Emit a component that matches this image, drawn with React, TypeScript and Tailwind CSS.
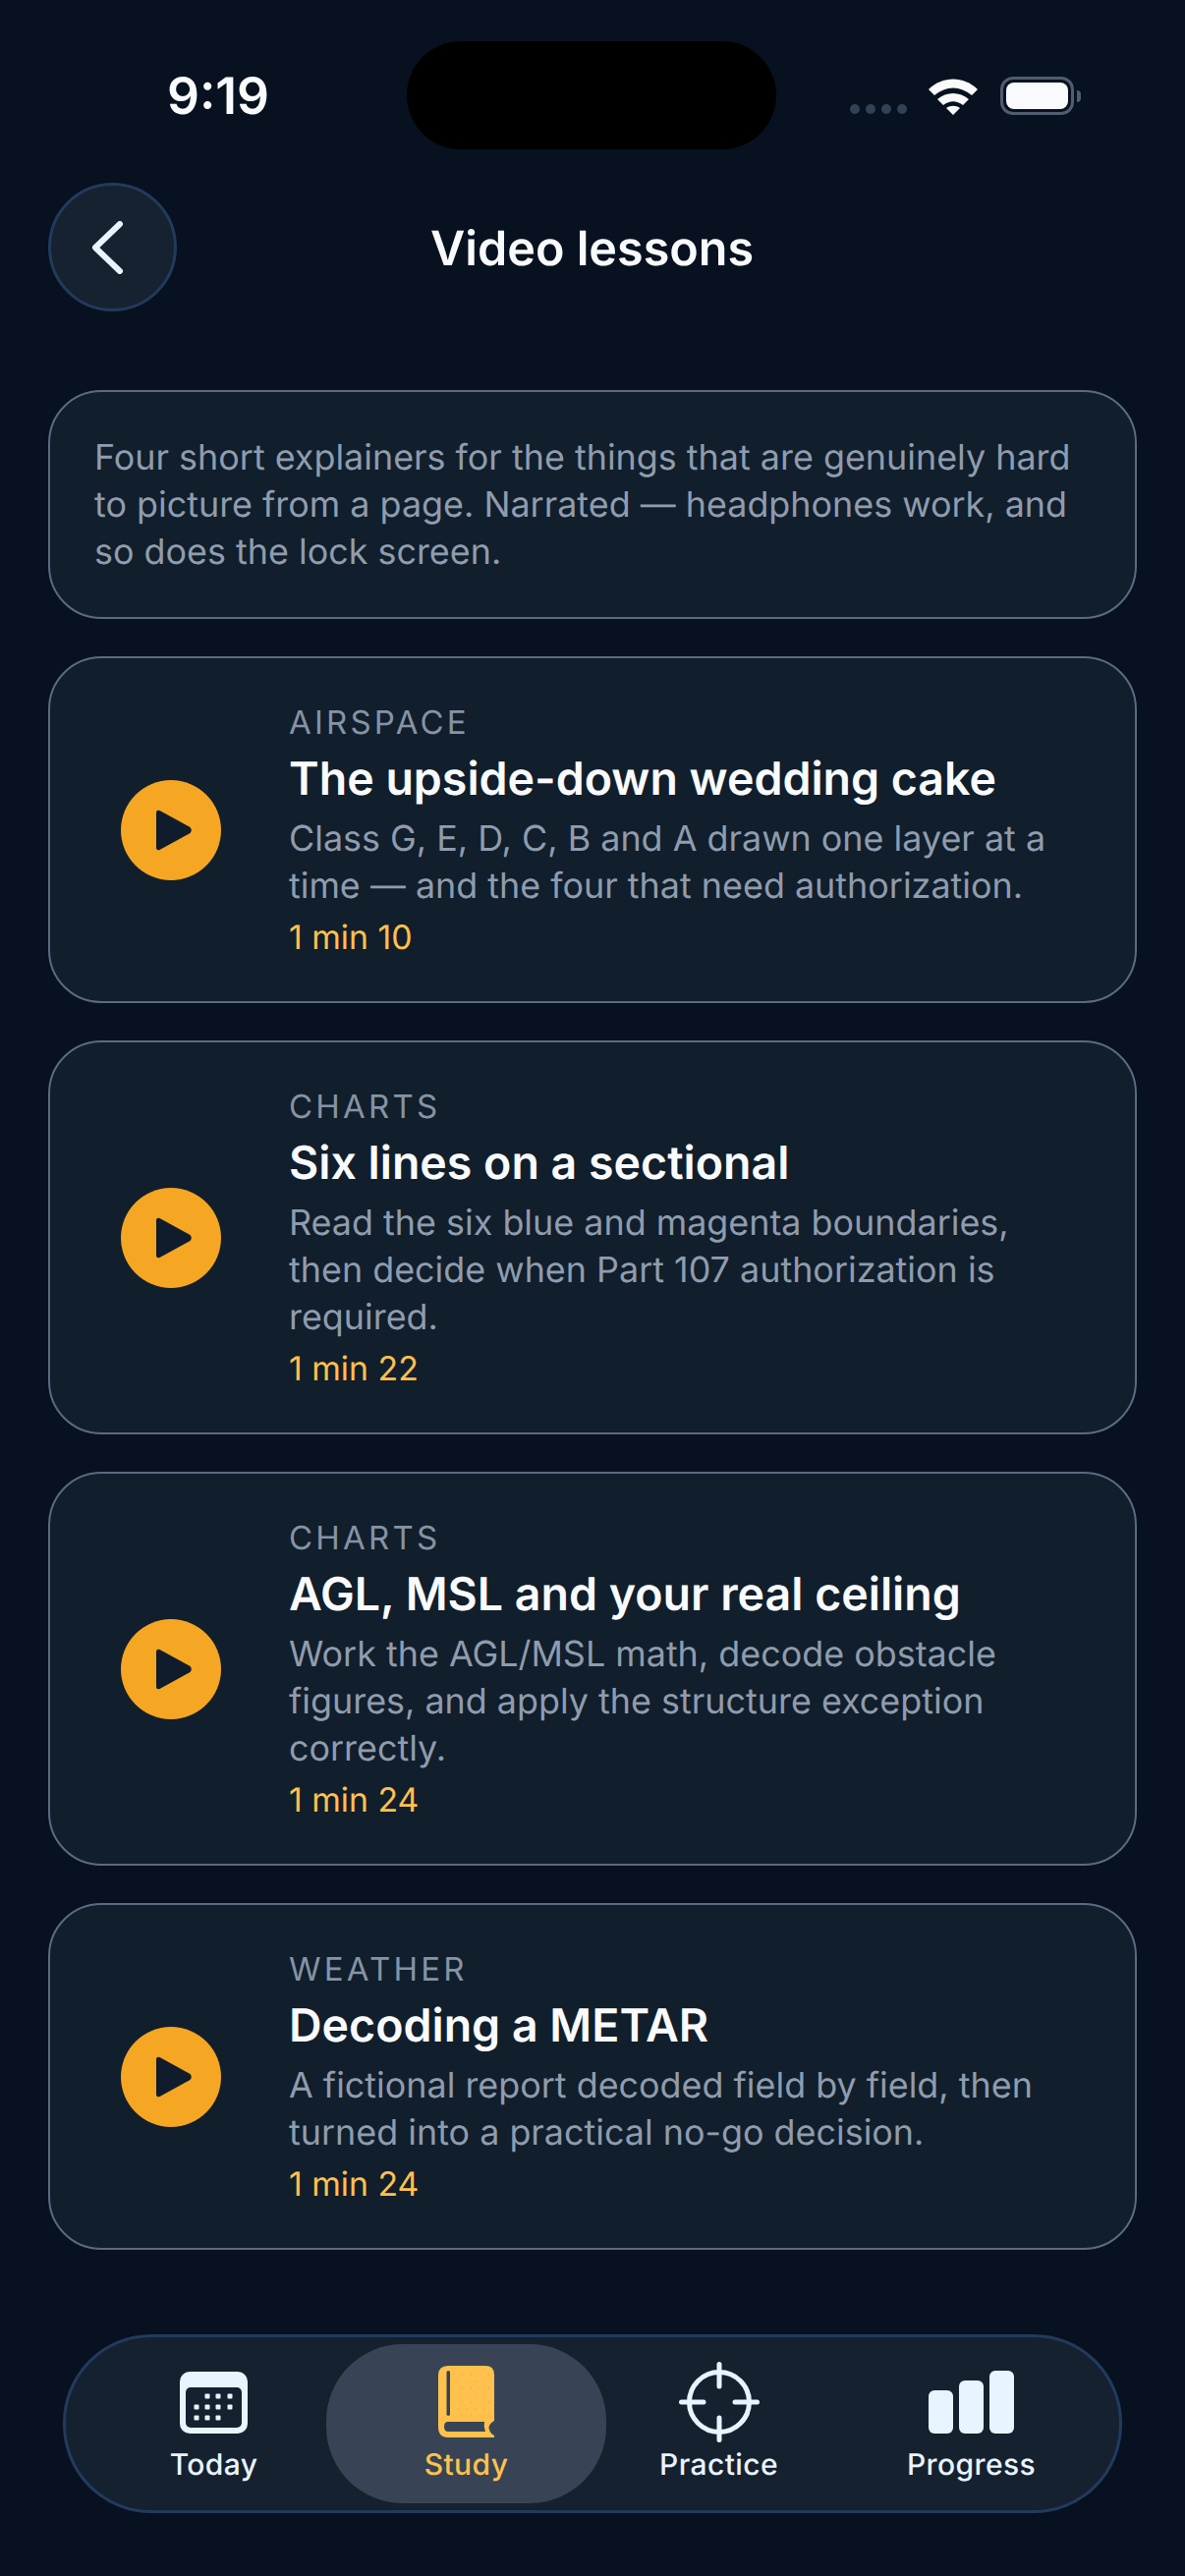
const lessons = [
  {
    tag: "AIRSPACE",
    title: "The upside-down wedding cake",
    body: ["Class G, E, D, C, B and A drawn one layer at a", "time — and the four that need authorization."],
    time: "1 min 10",
  },
  {
    tag: "CHARTS",
    title: "Six lines on a sectional",
    body: ["Read the six blue and magenta boundaries,", "then decide when Part 107 authorization is", "required."],
    time: "1 min 22",
  },
  {
    tag: "CHARTS",
    title: "AGL, MSL and your real ceiling",
    body: ["Work the AGL/MSL math, decode obstacle", "figures, and apply the structure exception", "correctly."],
    time: "1 min 24",
  },
  {
    tag: "WEATHER",
    title: "Decoding a METAR",
    body: ["A fictional report decoded field by field, then", "turned into a practical no-go decision."],
    time: "1 min 24",
  },
];

const StatusBar = () => (
  <div className="flex h-[186px] items-start">
    <div className="mt-[44px] flex h-[110px] w-[414px] items-center justify-center pl-[30px]">
      <span className="text-[51.5px] font-semibold text-[#f8fafc]">9:19</span>
    </div>
    <div className="mt-[42px] h-[110px] w-[376px] rounded-full bg-black" />
    <div className="mt-[78px] ml-[75px] flex items-end">
      <div className="mb-[1px] flex gap-[6px]">
        {[0, 1, 2, 3].map((i) => (
          <span key={i} className="h-[10px] w-[10px] rounded-full bg-[#334155]" />
        ))}
      </div>
      <svg className="ml-[22px]" width="50" height="38" viewBox="0 0 50 38">
        <path d="M0 12 C14 -2 36 -2 50 12 L44 18 C32 8 18 8 6 18 Z" fill="#f8fafc" />
        <path d="M9 22 C18 14 32 14 41 22 L35 28 C28 23 22 23 15 28 Z" fill="#f8fafc" />
        <path d="M18 31 C22 28 28 28 32 31 L25 38 Z" fill="#f8fafc" />
      </svg>
      <div className="ml-[23px] flex h-[39px] w-[75px] items-center justify-center rounded-[13px] border-[3px] border-[#4f5d6e]">
        <div className="h-[27px] w-[63px] rounded-[8px] bg-[#f8fafc]" />
      </div>
      <div className="mb-[13px] ml-[3px] h-[12px] w-[4px] rounded-r-full bg-[#4f5d6e]" />
    </div>
  </div>
);

const Header = () => (
  <div className="flex h-[131px] items-center px-[49px]">
    <button className="flex h-[131px] w-[131px] shrink-0 items-center justify-center rounded-full border-[3px] border-[#223a5e] bg-[#16222f]">
      <svg className="mr-[12px]" width="34" height="54" viewBox="0 0 34 54" fill="none">
        <path d="M30 3 L5 27 L30 51" stroke="#eaf4ff" strokeWidth="6" strokeLinecap="round" strokeLinejoin="round" />
      </svg>
    </button>
    <h1 className="ml-[258px] pt-[3px] text-[48.5px] font-semibold text-[#f8fafc]">Video lessons</h1>
  </div>
);

const LessonCard = ({ lesson }: { lesson: (typeof lessons)[number] }) => (
  <div className="flex items-center rounded-[54px] border-2 border-[#5a6b80] bg-[#111e2b] pt-[45px] pb-[44px] pl-[72px] pr-[40px]">
    <div className="flex h-[102px] w-[102px] shrink-0 items-center justify-center rounded-full bg-[#f5a623]">
      <svg className="ml-[6px]" width="38" height="42" viewBox="0 0 38 42">
        <path d="M1 3.5 Q1 0 4.5 1 L35.5 18 Q38 21 35.5 24 L4.5 41 Q1 42 1 38.5 Z" fill="#101c2b" />
      </svg>
    </div>
    <div className="ml-[69px] flex min-w-0 flex-col">
      <div className="text-[33px] leading-[40px] tracking-[3.2px] text-[#8593a5]">{lesson.tag}</div>
      <div className="mt-[10px] text-[46.5px] leading-[56px] font-semibold text-[#f8fafc]">{lesson.title}</div>
      <div className="mt-[8px] text-[35.9px] leading-[48px] text-[#8f9cae]">
        {lesson.body.map((line) => (
          <div key={line} className="whitespace-nowrap">{line}</div>
        ))}
      </div>
      <div className="mt-[10px] text-[33.8px] leading-[40px] text-[#ffc14d]">{lesson.time}</div>
    </div>
  </div>
);

const CalendarIcon = () => (
  <svg width="69" height="63" viewBox="0 0 69 63">
    <rect width="69" height="63" rx="10" fill="#e8f4ff" />
    <rect x="6" y="16" width="57" height="41" rx="5" fill="#15212f" />
    {[
      [28, 25], [39, 25], [51, 25],
      [17, 36], [28, 36], [39, 36], [51, 36],
      [17, 47], [28, 47], [39, 47],
    ].map(([x, y]) => (
      <rect key={`${x}-${y}`} x={x - 2.5} y={y - 2.5} width="5" height="5" rx="1" fill="#e8f4ff" />
    ))}
  </svg>
);

const BookIcon = () => (
  <svg width="57" height="74" viewBox="0 0 57 74">
    <defs>
      <pattern id="book-dots" width="9" height="14" patternUnits="userSpaceOnUse">
        <circle cx="2" cy="2" r="0.7" fill="#f5a623" />
        <circle cx="6.5" cy="9" r="0.7" fill="#f5a623" />
      </pattern>
    </defs>
    <path d="M10 0 H48 Q57 0 57 9 V56 Q50 60 52 65 Q53 69 57 71 V73 H10 Q0 73 0 62 V10 Q0 0 10 0 Z" fill="#ffc14d" />
    <rect x="15" y="5" width="39" height="48" fill="url(#book-dots)" />
    <rect x="8.5" y="5" width="3.5" height="46" rx="1.75" fill="#384455" />
    <path d="M10 57 H47 Q46 62 48 67 H10 Q6 67 6 62 Q6 57 10 57 Z" fill="#384455" />
  </svg>
);

const TargetIcon = () => (
  <svg width="82" height="82" viewBox="0 0 82 82" fill="none" stroke="#e8f4ff" strokeLinecap="round">
    <circle cx="41" cy="41" r="30.5" strokeWidth="5" />
    <path d="M41 2.5 V25 M41 57 V79.5 M2.5 41 H25 M57 41 H79.5" strokeWidth="5" />
  </svg>
);

const BarsIcon = () => (
  <div className="flex h-[64px] items-end gap-[6px]">
    <div className="h-[44px] w-[25px] rounded-[6px] bg-[#e8f4ff]" />
    <div className="h-[54px] w-[25px] rounded-[6px] bg-[#e8f4ff]" />
    <div className="h-[64px] w-[25px] rounded-[6px] bg-[#e8f4ff]" />
  </div>
);

const navItems = [
  { label: "Today", icon: <CalendarIcon /> },
  { label: "Study", icon: <BookIcon />, active: true },
  { label: "Practice", icon: <TargetIcon /> },
  { label: "Progress", icon: <BarsIcon /> },
];

const TabBar = () => (
  <nav className="mx-[64px] flex h-[182px] items-center rounded-[90px] border-[3px] border-[#223a5e] bg-[#15212f] px-[22px]">
    {navItems.map((item) => (
      <div
        key={item.label}
        className={
          item.active
            ? "-mx-[14px] flex h-[162px] w-[285px] flex-col items-center rounded-[78px] bg-[#384455] text-[#ffc14d]"
            : "flex h-[162px] w-[257px] flex-col items-center text-[#e8f4ff]"
        }
      >
        <div className="mt-[18px] flex h-[82px] items-center justify-center">{item.icon}</div>
        <div className="mt-[3px] text-[30px] leading-[40px] font-medium tracking-[0.4px]">{item.label}</div>
      </div>
    ))}
  </nav>
);

export default function App() {
  return (
    <div className="flex h-[2622px] w-[1206px] flex-col overflow-hidden bg-[#07111f] font-['Inter',sans-serif] [text-rendering:geometricPrecision]">
      <StatusBar />
      <Header />
      <main className="mt-[80px] flex flex-col gap-[38px] px-[49px]">
        <div className="rounded-[54px] border-2 border-[#5a6b80] bg-[#111e2b] pl-[45px] pr-[40px] pt-[42px] pb-[43px] text-[35.9px] leading-[48px] text-[#8f9cae]">
          <div>Four short explainers for the things that are genuinely hard</div>
          <div>to picture from a page. Narrated — headphones work, and</div>
          <div>so does the lock screen.</div>
        </div>
        {lessons.map((lesson) => (
          <LessonCard key={lesson.title} lesson={lesson} />
        ))}
      </main>
      <div className="mt-auto mb-[64px]">
        <TabBar />
      </div>
    </div>
  );
}
